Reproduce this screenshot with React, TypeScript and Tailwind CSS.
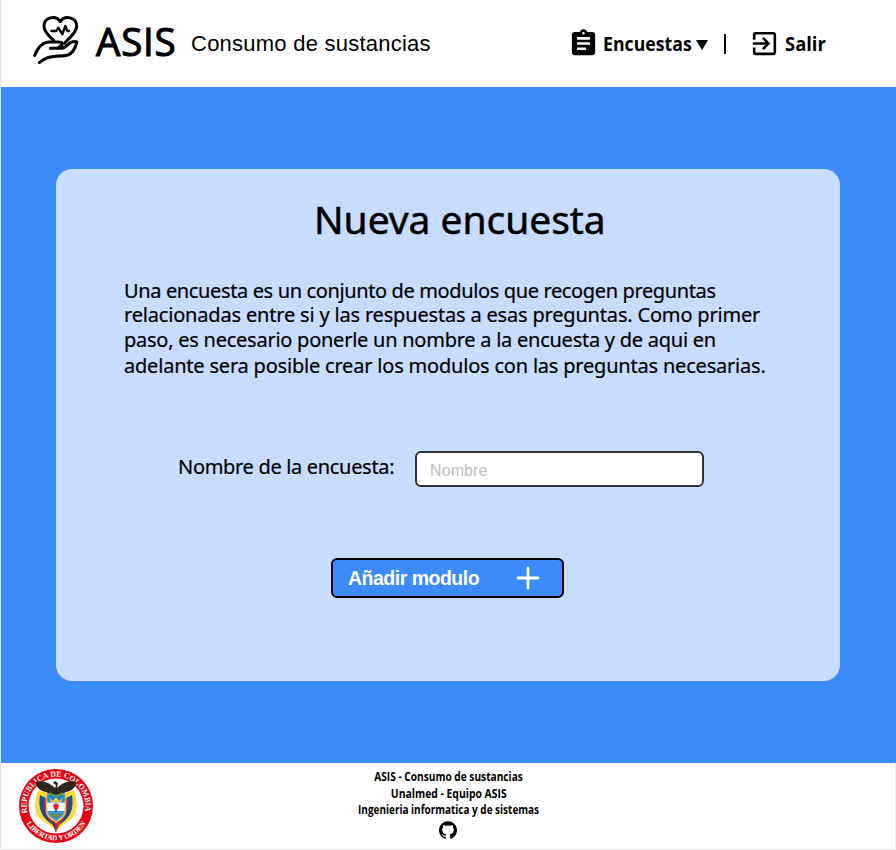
import React from 'react';
import { MdAssignment, MdExitToApp } from 'react-icons/md';
import { SiGithub } from 'react-icons/si';

function CareLogo() {
  return (
    <svg
      className="h-[52px] w-12 shrink-0"
      viewBox="96 42 144 156"
      fill="none"
      stroke="black"
      strokeWidth="9"
      strokeLinecap="round"
      strokeLinejoin="round"
    >
      <path d="M181 65C168 45 132 50 132 79C132 98 149 109 161 121M181 65C193 45 230 50 230 79C230 100 207 112 194 130" />
      <path strokeWidth="7" d="M154 93H169L175 83L187 103L196 78L202 93H207" />
      <path d="M104 166C114 142 126 126 148 126H175C188 126 192 132 182 137L175 145M151 145H183C196 145 202 133 213 127C220 124 226 123 231 126C226 144 217 160 204 165C190 170 162 166 141 174C130 178 122 185 118 188" />
    </svg>
  );
}

function Emblem() {
  return (
    <svg className="h-[76px] w-[76px]" viewBox="0 0 76 76">
      <defs>
        <path id="arc-top" d="M9.6 46A29.5 29.5 0 1 1 66.4 46" />
        <path id="arc-bottom" d="M6.5 52A34.6 34.6 0 0 0 69.5 52" />
      </defs>
      <circle cx="38" cy="38" r="37" fill="#e30613" />
      <circle cx="38" cy="38" r="27.5" fill="white" />
      <g fill="white" fontFamily="Liberation Serif, serif" fontWeight="700">
        <text fontSize="8">
          <textPath href="#arc-top" startOffset="1" textLength="105" lengthAdjust="spacingAndGlyphs">
            REPUBLICA DE COLOMBIA
          </textPath>
        </text>
        <text fontSize="7.4">
          <textPath href="#arc-bottom" startOffset="4" textLength="71">
            LIBERTAD Y ORDEN
          </textPath>
        </text>
      </g>
      <path d="M20 22C16 35 15 48 27 54L38 62L34 27Z" fill="#ffd92e" />
      <path d="M56 22C60 35 61 48 49 54L38 62L42 27Z" fill="#ffd92e" />
      <path d="M22 27C20 41 23 49 35 57L29 31Z" fill="#1d4a96" />
      <path d="M54 27C56 41 53 49 41 57L47 31Z" fill="#1d4a96" />
      <path d="M26 31L27 45L33 54L38 63L43 54L49 45L50 31L48 31L38 56L28 31Z" fill="#d9232e" />
      <path
        d="M28.5 26H47.5V43C47.5 49 42 52 38 54C34 52 28.5 49 28.5 43Z"
        fill="#edf5ff"
        stroke="#edb82c"
        strokeWidth="1.4"
      />
      <path d="M29.2 26.5H46.8V34.5H29.2Z" fill="#248bd2" />
      <path d="M31 30L35 33L38 29L41 33L45 30L43 34H33Z" fill="#f3c832" />
      <path d="M29.2 43H46.8C46 48.5 42 50 38 53C34 50 30 48.5 29.2 43Z" fill="#3c92d5" />
      <path d="M32 46H44L40.5 49.5H35.5Z" fill="#638c3d" />
      <path d="M35 37L38 35L41 37L40 41H36Z" fill="#e72336" />
      <path d="M37 41V43.5H39V41" fill="#894a26" />
      <path
        d="M37 20C32 15 24 12 17.5 14C18 19 22 23 28 24L34 27H42L48 24C54 23 58 19 58.5 14C52 12 44 15 39 20L40 15L37 13L35 15L38 17Z"
        fill="#30241d"
      />
      <path d="M31 25C34 28 42 28 45 25" fill="none" stroke="#55964a" strokeWidth="2" />
      <path d="M35 55L38 65L41 55Z" fill="#ce2435" />
      <path d="M34 54L38 65L36.5 53Z" fill="#204c91" />
    </svg>
  );
}

export default function App() {
  return (
    <div className="flex h-[850px] w-[896px] flex-col overflow-hidden border-b border-l border-[#e5e5e5] bg-white text-black">
      <header className="flex h-[87px] shrink-0 items-start pl-[31px]">
        <div className="pt-[14px]">
          <CareLogo />
        </div>
        <h1 className="ml-4 w-[95px] pt-[17px] font-['Open_Sans'] text-[38.5px] leading-[48px] tracking-[0.8px] whitespace-nowrap [-webkit-text-stroke:1.1px_black]">
          ASIS
        </h1>
        <p className="w-[377px] pt-[31px] font-['Liberation_Sans'] text-[22px] leading-[26px] tracking-[0.24px] whitespace-nowrap">
          Consumo de sustancias
        </p>
        <nav className="flex h-[87px] items-center font-['Open_Sans'] text-[20px] font-bold">
          <MdAssignment className="size-[31px] shrink-0" />
          <span className="ml-1 w-[93px] origin-left scale-x-[0.885] whitespace-nowrap">Encuestas</span>
          <svg className="mt-[3px] h-[10px] w-[12px] shrink-0" viewBox="0 0 12 10">
            <path d="M0 0H12L6 10Z" />
          </svg>
          <span className="ml-4 h-5 w-[2px] shrink-0 bg-black" />
          <MdExitToApp className="ml-[23px] size-[31px] shrink-0" />
          <span className="ml-[5px] w-[42px] origin-left scale-x-[0.92] whitespace-nowrap">Salir</span>
        </nav>
      </header>
      <main className="flex h-[676px] shrink-0 bg-[#3d8bf8] pt-[82px] pl-[55px]">
        <section className="flex h-[512px] w-[784px] flex-col rounded-2xl bg-[#c8dcff] font-['Noto_Sans']">
          <h2 className="mt-[22px] ml-[258px] text-[39px] leading-[56px] tracking-[-0.05px] whitespace-nowrap [-webkit-text-stroke:0.5px_black]">
            Nueva encuesta
          </h2>
          <p className="mt-[31px] ml-[68px] text-[20px] whitespace-nowrap [-webkit-text-stroke:0.2px_black]">
            <span className="block leading-[26px] tracking-[-0.37px]">
              Una encuesta es un conjunto de modulos que recogen preguntas
            </span>
            <span className="block leading-[22px] tracking-[-0.18px]">
              relacionadas entre si y las respuestas a esas preguntas. Como primer
            </span>
            <span className="block leading-[27px] tracking-[-0.25px]">
              paso, es necesario ponerle un nombre a la encuesta y de aqui en
            </span>
            <span className="block leading-[26px] tracking-[-0.2px]">
              adelante sera posible crear los modulos con las preguntas necesarias.
            </span>
          </p>
          <div className="mt-[72px] ml-[122px] flex h-[36px]">
            <label
              htmlFor="nombre"
              className="w-[237px] text-[20px] leading-[32px] tracking-[-0.32px] whitespace-nowrap [-webkit-text-stroke:0.2px_black]"
            >
              Nombre de la encuesta:
            </label>
            <input
              id="nombre"
              placeholder="Nombre"
              className="h-[36px] w-[289px] rounded-[6px] border-2 border-[#333] bg-white pt-1 pl-[13px] font-['Liberation_Sans'] text-[16px] tracking-[0.1px] placeholder:text-[#bdbdbd]"
            />
          </div>
          <button className="mt-[71px] ml-[275px] flex h-10 w-[233px] items-center rounded-[6px] border-2 border-black bg-[#3d8bf8] pl-[15px] font-['Liberation_Sans'] text-[19.5px] font-bold text-white">
            <span className="w-[168px] pt-px text-left tracking-[-0.5px] whitespace-nowrap">Añadir modulo</span>
            <svg
              className="size-[24px]"
              viewBox="0 0 24 24"
              stroke="white"
              strokeWidth="2.8"
              strokeLinecap="round"
            >
              <path d="M12 2V22M2 12H22" />
            </svg>
          </button>
        </section>
      </main>
      <footer className="flex h-[86px] shrink-0 border-r border-[#eee]">
        <div className="w-[231px] pt-[5px] pl-[17px]">
          <Emblem />
        </div>
        <div className="flex w-[434px] flex-col items-center pt-[6px] font-['Open_Sans'] text-[12.5px] leading-[16.5px] font-bold whitespace-nowrap">
          <p className="scale-x-[0.812]">ASIS - Consumo de sustancias</p>
          <p className="scale-x-[0.83]">Unalmed - Equipo ASIS</p>
          <p className="scale-x-[0.797]">Ingenieria informatica y de sistemas</p>
          <SiGithub className="mt-[2px] mr-[2px] size-[18px]" />
        </div>
      </footer>
    </div>
  );
}
